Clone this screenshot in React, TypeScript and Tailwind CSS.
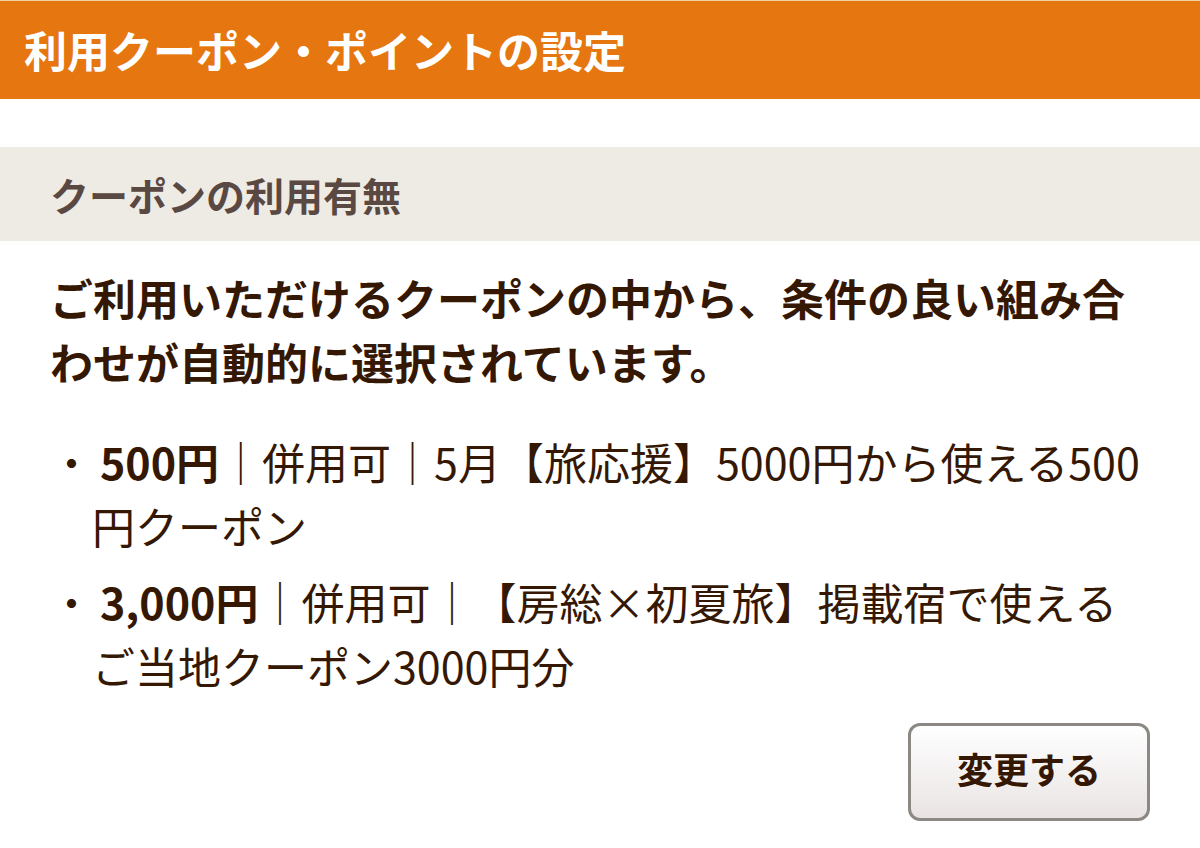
import React from 'react'

type Coupon = {
  amount: string
  combinable: string
  name: string
}

const coupons: Coupon[] = [
  { amount: '500円', combinable: '併用可', name: '5月【旅応援】5000円から使える500円クーポン' },
  { amount: '3,000円', combinable: '併用可', name: '【房総×初夏旅】掲載宿で使えるご当地クーポン3000円分' },
]

function CouponItem({ coupon }: { coupon: Coupon }) {
  return (
    <li className="flex">
      <span className="w-[42px] shrink-0">・</span>
      <p>
        <strong className="ml-2 font-bold">{coupon.amount}</strong>
        {`｜${coupon.combinable}｜${coupon.name}`}
      </p>
    </li>
  )
}

export default function App() {
  return (
    <main className="min-h-screen bg-white font-['Noto_Sans_CJK_JP',sans-serif] text-[43px] leading-[64px] text-[#351803]">
      <h1 className="border-t border-[#f0d3a0] bg-[#e6760f] px-6 pt-4 pb-[18px] font-bold text-white">
        利用クーポン・ポイントの設定
      </h1>

      <section className="mt-12">
        <h2 className="bg-[#eeebe5] px-[50px] py-[15px] text-[39px] font-bold text-[#5a4842]">
          クーポンの利用有無
        </h2>

        <div className="px-[50px] pt-6">
          <p className="font-bold">
            ご利用いただけるクーポンの中から、条件の良い組み合わせが自動的に選択されています。
          </p>

          <ul className="mt-9 space-y-3">
            {coupons.map((coupon) => (
              <CouponItem key={coupon.amount} coupon={coupon} />
            ))}
          </ul>

          <div className="mt-[26px] flex justify-end">
            <button
              type="button"
              className="rounded-xl border-[3px] border-[#8c8884] bg-linear-to-b from-white to-[#e9e4e3] px-[46px] pt-[10px] pb-[18px] text-[36px] font-bold"
            >
              変更する
            </button>
          </div>
        </div>
      </section>
    </main>
  )
}
